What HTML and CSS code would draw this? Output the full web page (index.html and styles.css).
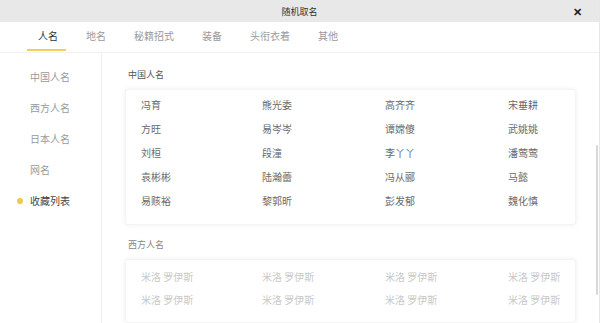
FILE: index.html
```html
<!DOCTYPE html>
<html lang="zh">
<head>
<meta charset="utf-8">
<link rel="stylesheet" href="styles.css">
</head>
<body>
<div class="window">
  <div class="titlebar">
    <span class="title">随机取名</span>
    <span class="close">✕</span>
  </div>
  <div class="tabs">
    <span class="tab active">人名</span>
    <span class="tab">地名</span>
    <span class="tab">秘籍招式</span>
    <span class="tab">装备</span>
    <span class="tab">头衔衣着</span>
    <span class="tab">其他</span>
  </div>
  <div class="body">
    <div class="sidebar">
      <div class="side-item">中国人名</div>
      <div class="side-item">西方人名</div>
      <div class="side-item">日本人名</div>
      <div class="side-item">网名</div>
      <div class="side-item current"><span class="dot"></span>收藏列表</div>
    </div>
    <div class="content">
      <div class="section-label">中国人名</div>
      <div class="card">
        <span class="name">冯育</span><span class="name">熊光委</span><span class="name">高齐齐</span><span class="name">宋垂耕</span>
        <span class="name">方旺</span><span class="name">易岑岑</span><span class="name">谭嫦傻</span><span class="name">武姚姚</span>
        <span class="name">刘桓</span><span class="name">段潼</span><span class="name">李丫丫</span><span class="name">潘莺莺</span>
        <span class="name">袁彬彬</span><span class="name">陆瀚蕾</span><span class="name">冯从郦</span><span class="name">马懿</span>
        <span class="name">易赅裕</span><span class="name">黎郭昕</span><span class="name">彭发郁</span><span class="name">魏化慎</span>
      </div>
      <div class="section-label second">西方人名</div>
      <div class="card faded">
        <span class="name">米洛 罗伊斯</span><span class="name">米洛 罗伊斯</span><span class="name">米洛 罗伊斯</span><span class="name">米洛 罗伊斯</span>
        <span class="name">米洛 罗伊斯</span><span class="name">米洛 罗伊斯</span><span class="name">米洛 罗伊斯</span><span class="name">米洛 罗伊斯</span>
      </div>
      <div class="scroll-thumb"></div>
    </div>
  </div>
</div>
</body>
</html>
```
FILE: styles.css
```css
* { box-sizing: border-box; }
html, body { margin: 0; padding: 0; }
body {
  width: 600px;
  height: 323px;
  overflow: hidden;
  background: #fff;
  font-family: "Noto Sans CJK SC", "Noto Sans", sans-serif;
}
.window {
  width: 600px;
  height: 323px;
  display: flex;
  flex-direction: column;
  border-right: 1px solid #e6e6e6;
}
.titlebar {
  height: 22px;
  flex: none;
  background: #e8e8e8;
  position: relative;
  display: flex;
  align-items: center;
  justify-content: center;
}
.title {
  font-size: 9px;
  color: #333;
}
.close {
  position: absolute;
  right: 17px;
  top: 3px;
  font-size: 11px;
  font-weight: bold;
  color: #222;
  line-height: 16px;
}
.tabs {
  height: 31px;
  flex: none;
  display: flex;
  padding-left: 27px;
  border-bottom: 1px solid #f1f1f1;
}
.tab {
  font-size: 10px;
  color: #9a9a9a;
  line-height: 28px;
  padding: 0 10px 0 11px;
  margin-right: 7px;
  position: relative;
}
.tab.active {
  color: #333;
}
.tab.active::after {
  content: "";
  position: absolute;
  left: 0;
  right: 2px;
  bottom: 1px;
  height: 2px;
  background: #f1cf5a;
}
.body {
  flex: 1;
  display: flex;
  min-height: 0;
}
.sidebar {
  width: 102px;
  flex: none;
  border-right: 1px solid #efefef;
  padding-top: 14px;
}
.side-item {
  height: 31px;
  line-height: 20px;
  font-size: 10px;
  color: #9a9a9a;
  padding-left: 30px;
  position: relative;
}
.side-item.current {
  color: #444;
}
.dot {
  position: absolute;
  left: 17px;
  top: 7px;
  width: 6px;
  height: 6px;
  border-radius: 50%;
  background: #efc94c;
}
.content {
  flex: 1;
  position: relative;
  padding: 15px 23px 0 23px;
  overflow: hidden;
}
.section-label {
  font-size: 9px;
  color: #555;
  line-height: 14px;
  padding-left: 3px;
  margin-bottom: 7px;
}
.section-label.second {
  margin-top: 13px;
  color: #888;
}
.card {
  background: #fff;
  border-radius: 3px;
  box-shadow: 0 0 4px rgba(0,0,0,0.07);
  border: 1px solid #f4f4f4;
  display: grid;
  grid-template-columns: 121px 123px 123px 1fr;
  grid-auto-rows: 24px;
  padding: 3px 15px 11px 15px;
}
.name {
  font-size: 10px;
  color: #6a6a6a;
  line-height: 24px;
  white-space: nowrap;
}
.card.faded .name {
  color: #c8c8c8;
}
.card.faded {
  padding-top: 5px;
  grid-auto-rows: 23px;
}
.scroll-thumb {
  position: absolute;
  right: 1px;
  top: 92px;
  width: 2px;
  height: 150px;
  background: #d8d8d8;
  border-radius: 1px;
}
```
